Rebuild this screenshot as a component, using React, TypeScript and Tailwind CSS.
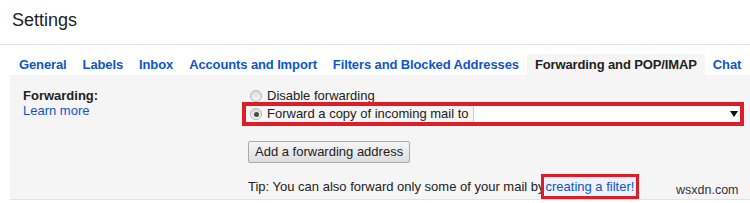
import React from 'react'

const tabs = [
  'General',
  'Labels',
  'Inbox',
  'Accounts and Import',
  'Filters and Blocked Addresses',
  'Forwarding and POP/IMAP',
  'Chat',
]
const activeTab = 'Forwarding and POP/IMAP'

function Radio({ checked }: { checked?: boolean }) {
  return (
    <span className="flex h-[12px] w-[12px] shrink-0 items-center justify-center rounded-full border border-[#b4b4b4] bg-gradient-to-b from-[#dcdcdc] to-[#f6f6f6]">
      {checked && <span className="h-[5px] w-[5px] rounded-full bg-[#4a4a4a]" />}
    </span>
  )
}

export default function App() {
  return (
    <div className="relative h-[203px] w-[750px] overflow-hidden whitespace-nowrap bg-white font-['Liberation_Sans',Arial,sans-serif] text-[13px] text-[#222]">
      <div className="h-[45px] border-b border-[#e5e5e5] pl-[12px] pt-[10px] text-[18px] leading-[20px]">
        Settings
      </div>

      <div className="mt-[9px] flex pl-[11px] tracking-[-0.12px]">
        {tabs.map((t) =>
          t === activeTab ? (
            <div key={t} className="shrink-0 bg-[#f5f5f5] px-[8px] font-bold leading-[21px] text-[#222]">
              {t}
            </div>
          ) : (
            <div key={t} className="shrink-0 px-[8px] font-bold leading-[21px] text-[#15c]">
              {t}
            </div>
          ),
        )}
      </div>

      <div className="ml-[10px] flex h-[125px] border-b border-[#e3e3e3] bg-[#f5f5f5]">
        <div className="w-[238px] shrink-0 pl-[13px] pt-[13px] leading-[15px]">
          <div className="font-bold">Forwarding:</div>
          <div className="text-[#15c]">Learn more</div>
        </div>

        <div className="flex flex-1 flex-col pt-[14px]">
          <div className="flex h-[13px] items-center gap-[5px] pl-[2px]">
            <Radio />
            <span>Disable forwarding</span>
          </div>

          <div className="-ml-[6px] mr-[6px] flex h-[24px] items-center border-4 border-[#dc1e28]">
            <div className="flex items-center gap-[5px] pl-[4px]">
              <Radio checked />
              <span>Forward a copy of incoming mail to</span>
            </div>
            <div className="ml-[4px] flex h-full flex-1 items-center justify-end border-l border-[#cfcfcf] bg-white pr-[2px]">
              <svg width="8" height="6" viewBox="0 0 8 6">
                <path d="M0 0 H8 L4 6 Z" fill="#111" />
              </svg>
            </div>
          </div>

          <div className="mt-[15px]">
            <button className="h-[22px] rounded-[2px] border border-[#a9a9a9] bg-gradient-to-b from-[#f6f6f6] to-[#dddddd] px-[6px] text-[13px] leading-[20px] text-[#222]">
              Add a forwarding address
            </button>
          </div>

          <div className="mt-[11px] flex h-[25px] items-center">
            <span>Tip: You can also forward only some of your mail by</span>
            <span className="-ml-[4px] flex h-[25px] items-center border-[3px] border-[#dc1e28] bg-[#eef2fa] px-[2px] text-[#15c]">
              creating a filter!
            </span>
          </div>
        </div>
      </div>

      <div className="absolute left-[676px] top-[182px] text-[12.5px] leading-[16px] text-[#333]">
        wsxdn.com
      </div>
    </div>
  )
}
